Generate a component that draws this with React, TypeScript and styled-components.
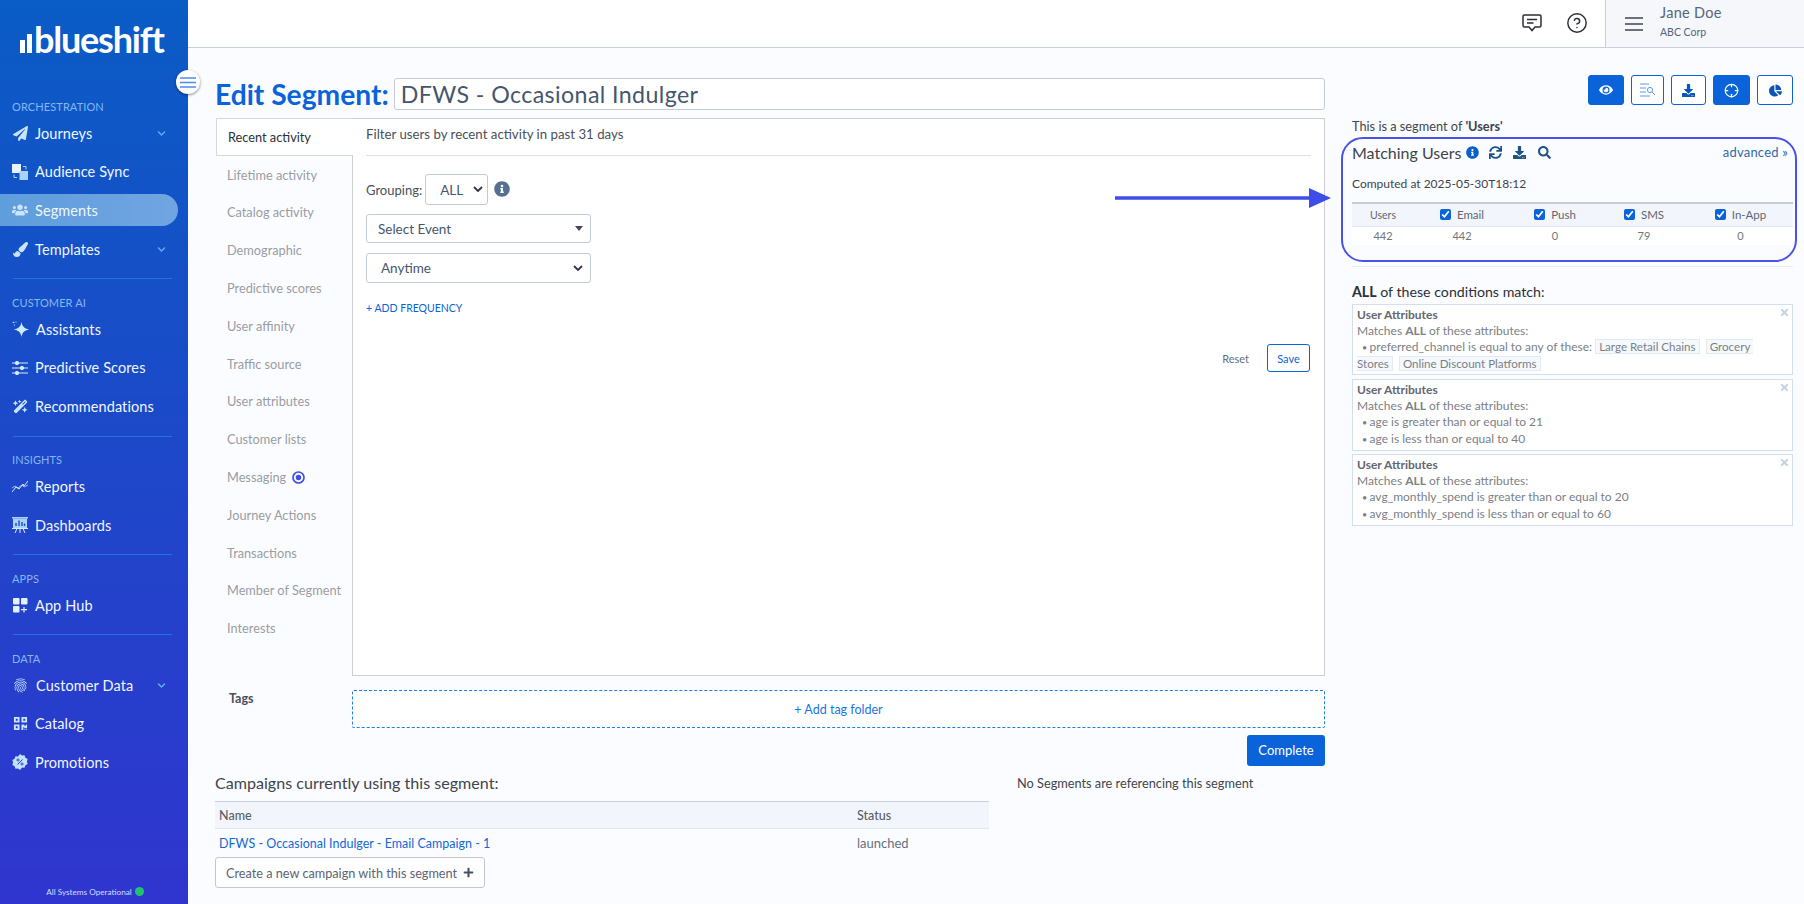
import React from "react";
import styled, { createGlobalStyle } from "styled-components";
import {
  FaChartPie,
  FaChevronDown,
  FaDownload,
  FaEye,
  FaInfoCircle,
  FaPaintBrush,
  FaPaperPlane,
  FaPlus,
  FaQrcode,
  FaSearch,
  FaSync,
  FaTimes,
  FaUsers,
} from "react-icons/fa";
import { FaWandMagicSparkles } from "react-icons/fa6";
import { MdFingerprint } from "react-icons/md";
import { CircleHelp, Crosshair } from "lucide-react";

const FONT = `Lato, "Open Sans", "Liberation Sans", sans-serif`;
const chevron =
  "data:image/svg+xml,%3Csvg xmlns='http://www.w3.org/2000/svg' width='10' height='7' viewBox='0 0 10 7'%3E%3Cpath d='M1 1l4 4 4-4' fill='none' stroke='%23334' stroke-width='1.8'/%3E%3C/svg%3E";
const caret =
  "data:image/svg+xml,%3Csvg xmlns='http://www.w3.org/2000/svg' width='8' height='5' viewBox='0 0 8 5'%3E%3Cpath d='M0 0h8L4 5z' fill='%23445'/%3E%3C/svg%3E";

const GlobalStyle = createGlobalStyle`
  html, body {
    margin: 0;
    height: 100%;
    overflow: hidden;
    background: #fbfcff;
    font-family: ${FONT};
  }
  * { box-sizing: border-box; }
`;

const Page = styled.div`
  position: relative;
  display: flex;
  width: 1804px;
  height: 904px;
  overflow: hidden;
`;

/* sidebar */
const Sidebar = styled.aside`
  position: relative;
  flex: 0 0 188px;
  display: flex;
  flex-direction: column;
  background: linear-gradient(180deg, #0a5cc6 0%, #1b4ac8 45%, #3035cf 100%);
`;

const Logo = styled.div`
  display: flex;
  align-items: flex-end;
  height: 100px;
  padding: 0 0 47px 20px;
  color: #fff;
`;

const LogoBar = styled.span<{ $h: number }>`
  width: 5px;
  height: ${(p) => p.$h}px;
  margin-right: 2px;
  background: #fff;
`;

const LogoText = styled.span`
  height: 25px;
  font-size: 36px;
  line-height: 23px;
  font-weight: 700;
  letter-spacing: -1.2px;
`;

const SectionLabel = styled.div`
  height: 14px;
  padding-left: 12px;
  font-size: 11px;
  line-height: 14px;
  color: #86b6f2;
  text-transform: uppercase;
  letter-spacing: 0.1px;
`;

const NavList = styled.div`
  display: flex;
  flex-direction: column;
  gap: 6.6px;
  padding: 3.3px 0;
`;

const NavRow = styled.div<{ $active?: boolean }>`
  display: flex;
  align-items: center;
  gap: 7px;
  width: 178px;
  height: 32px;
  padding: 0 12px;
  border-radius: 0 16px 16px 0;
  background: ${(p) => (p.$active ? "linear-gradient(90deg, #5f9ddc, #70a5e1)" : "transparent")};
  color: #f0f6ff;
  font-size: 14.5px;
  letter-spacing: 0.1px;
`;

const NavIcon = styled.span`
  flex: 0 0 16px;
  display: flex;
  align-items: center;
  justify-content: center;
  color: #c9e4ff;
`;

const NavName = styled.span`
  flex: 1;
  white-space: nowrap;
`;

const NavChevron = styled(FaChevronDown)`
  color: #5cb0f2;
  width: 9px;
  height: 9px;
`;

const NavRule = styled.div`
  height: 1px;
  margin: 10px 16px 16.5px 13px;
  background: #2272e2;
`;

const SidebarFooter = styled.div`
  margin-top: auto;
  height: 17px;
  display: flex;
  align-items: flex-start;
  justify-content: center;
  gap: 3px;
  padding-left: 2px;
  font-size: 8.2px;
  color: #d5defa;
`;

const StatusDot = styled.span`
  width: 9px;
  height: 9px;
  border-radius: 50%;
  background: #1fc46c;
`;

const CollapseToggle = styled.button`
  position: absolute;
  left: 176px;
  top: 70px;
  width: 24px;
  height: 24px;
  padding: 0;
  border: 0;
  border-radius: 50%;
  background: #fff;
  box-shadow: 0 1px 3px rgba(0, 0, 0, 0.45);
  display: flex;
  align-items: center;
  justify-content: center;
  z-index: 2;
`;

/* top bar */
const Main = styled.div`
  flex: 1;
  display: flex;
  flex-direction: column;
  min-width: 0;
`;

const TopBar = styled.header`
  height: 48px;
  flex: 0 0 48px;
  display: flex;
  justify-content: flex-end;
  background: #fff;
  border-bottom: 1px solid #c9cfda;
`;

const TopIcon = styled.span`
  width: 45px;
  display: flex;
  align-items: center;
  justify-content: center;
  color: #2c2f36;
  padding-bottom: 2px;
`;

const UserPanel = styled.div`
  width: 199px;
  margin-left: 6px;
  display: flex;
  align-items: center;
  gap: 16px;
  padding: 0 0 0 18px;
  background: #f5f7fb;
  border-left: 1px solid #c9cfda;
`;

const UserName = styled.div`
  font-size: 14.5px;
  line-height: 16px;
  color: #55657c;
  letter-spacing: 0.3px;
  margin-top: -4px;
`;

const UserOrg = styled.div`
  font-size: 10.5px;
  line-height: 12px;
  margin-top: 5px;
  color: #55657c;
`;

/* content */
const Content = styled.div`
  flex: 1;
  display: flex;
  padding: 0 11px 0 27px;
  gap: 27px;
`;

const LeftColumn = styled.div`
  flex: 0 0 1110px;
  padding-top: 30px;
`;

const RightColumn = styled.div`
  flex: 1;
  padding-top: 27px;
`;

const TitleRow = styled.div`
  display: flex;
  align-items: center;
  gap: 5px;
  height: 32px;
`;

const Title = styled.h1`
  margin: 0;
  font-size: 28.2px;
  font-weight: 700;
  color: #0a63d8;
  white-space: nowrap;
`;

const NameInput = styled.input`
  flex: 1;
  height: 32px;
  padding: 0 6px;
  border: 1px solid #c4cbd6;
  border-radius: 3px;
  background: #fff;
  color: #45566e;
  font: 400 23.2px ${FONT};
  letter-spacing: 0.4px;
`;

const TabPanel = styled.div`
  display: flex;
  height: 558px;
  margin-top: 8px;
`;

const TabList = styled.div`
  flex: 0 0 136px;
  margin-left: 1px;
  position: relative;
  z-index: 1;
`;

const Tab = styled.div<{ $active?: boolean }>`
  display: flex;
  align-items: center;
  gap: 6px;
  height: 37.8px;
  padding-left: 11px;
  font-size: 12.75px;
  white-space: nowrap;
  color: ${(p) => (p.$active ? "#2a2f38" : "#9a9da3")};
  ${(p) =>
    p.$active &&
    `
    background: #fff;
    border: 1px solid #d6d8dc;
    border-right: 0;
    margin-right: -1px;
  `}
`;

const TabBody = styled.div`
  flex: 1;
  padding: 0 13px;
  background: #fff;
  border: 1px solid #cfcfd2;
`;

const TabHeading = styled.div`
  height: 37px;
  line-height: 31px;
  font-size: 13.25px;
  color: #4a4f58;
  border-bottom: 1px solid #dcdfe4;
`;

const GroupingRow = styled.div`
  display: flex;
  align-items: center;
  gap: 3px;
  height: 31px;
  margin-top: 18px;
  font-size: 13px;
  color: #4a4f58;
  svg { color: #56708f; margin: -2px 0 0 3px; }
`;

const selectBase = `
  appearance: none;
  border: 1px solid #c4cbd6;
  border-radius: 3px;
  background-color: #fff;
  background-repeat: no-repeat;
  color: #45566e;
  font: 400 13.5px ${FONT};
`;

const GroupingSelect = styled.select`
  ${selectBase}
  width: 63px;
  height: 31px;
  padding-left: 14px;
  background-image: url("${chevron}");
  background-position: right 4px center;
`;

const WideSelect = styled.select<{ $caret?: boolean }>`
  ${selectBase}
  display: block;
  width: 225px;
  height: ${(p) => (p.$caret ? 29 : 30)}px;
  margin-top: ${(p) => (p.$caret ? 9 : 10)}px;
  padding-left: ${(p) => (p.$caret ? 11 : 14)}px;
  background-image: url("${(p) => (p.$caret ? caret : chevron)}");
  background-position: right 7px center;
`;

const AddFrequency = styled.div`
  margin-top: 17px;
  height: 17px;
  line-height: 17px;
  font-size: 10.5px;
  color: #0a63d8;
`;

const FormActions = styled.div`
  display: flex;
  justify-content: flex-end;
  align-items: center;
  gap: 18px;
  margin: 27px 1px 0 0;
  font-size: 11px;
  color: #66707e;
`;

const SaveButton = styled.button`
  width: 43px;
  height: 28px;
  background: #fff;
  border: 1px solid #0a63d8;
  border-radius: 3px;
  color: #0a63d8;
  font: 400 11px ${FONT};
`;

const TagsRow = styled.div`
  display: flex;
  margin-top: 14px;
`;

const TagsLabel = styled.div`
  flex: 0 0 137px;
  padding: 1px 0 0 14px;
  font-size: 12.5px;
  font-weight: 700;
  color: #4a4f58;
`;

const TagFolder = styled.div`
  flex: 1;
  height: 38px;
  display: flex;
  align-items: center;
  justify-content: center;
  background: #fff;
  border: 1px dashed #1e7de6;
  border-radius: 2px;
  color: #1c74e0;
  font-size: 12.5px;
`;

const CompleteRow = styled.div`
  display: flex;
  justify-content: flex-end;
  margin-top: 7px;
`;

const CompleteButton = styled.button`
  width: 78px;
  height: 31px;
  padding-bottom: 2px;
  border: 0;
  border-radius: 3px;
  background: #0a63d8;
  color: #fff;
  font: 400 13px ${FONT};
`;

const BottomGrid = styled.div`
  display: flex;
  margin-top: 6px;
`;

const CampaignColumn = styled.div`
  flex: 0 0 774px;
`;

const SectionHeading = styled.div`
  height: 22px;
  line-height: 22px;
  font-size: 16.1px;
  color: #3f444d;
`;

const CampaignHead = styled.div`
  display: grid;
  grid-template-columns: 638px 1fr;
  height: 28px;
  margin-top: 7px;
  align-items: center;
  padding-left: 4px;
  background: #f2f6fc;
  border-top: 1px solid #c9cfda;
  border-bottom: 1px solid #e2e6ee;
  font-size: 12.5px;
  font-weight: 500;
  color: #5b6068;
`;

const CampaignRow = styled.div`
  display: grid;
  grid-template-columns: 638px 1fr;
  height: 28px;
  align-items: center;
  padding-left: 4px;
  font-size: 13px;
  color: #66707e;
`;

const CampaignLink = styled.a`
  color: #1468d6;
  font-size: 12.5px;
`;

const CreateButton = styled.button`
  display: flex;
  align-items: center;
  gap: 6px;
  height: 31px;
  padding: 0 10px;
  background: #fff;
  border: 1px solid #c4c8ce;
  border-radius: 3px;
  color: #5a6472;
  font: 400 12.7px ${FONT};
  svg { color: #46505e; }
`;

const NoSegments = styled.div`
  padding-left: 28px;
  font-size: 12.75px;
  line-height: 22px;
  color: #3f444d;
`;

/* right side */
const Toolbar = styled.div`
  display: flex;
  justify-content: flex-end;
  gap: 7px;
`;

const ToolButton = styled.span<{ $filled?: boolean; $w: number }>`
  width: ${(p) => p.$w}px;
  height: 30px;
  display: flex;
  align-items: center;
  justify-content: center;
  border: 1px solid #0a63d8;
  border-radius: 3px;
  background: ${(p) => (p.$filled ? "#0a63d8" : "#fff")};
  color: ${(p) => (p.$filled ? "#fff" : "#0a56b8")};
`;

const SegmentNote = styled.div`
  margin-top: 13px;
  height: 16px;
  line-height: 16px;
  font-size: 12.75px;
  color: #3f444d;
  b { color: #3f444d; }
`;

const MatchBox = styled.section`
  margin: 3px -4px 0 -11px;
  padding: 2px 2px 0 9px;
  height: 125px;
  border: 2px solid #4a52ea;
  border-radius: 22px;
`;

const MatchHead = styled.div`
  display: flex;
  align-items: center;
  height: 22px;
  color: #1f5288;
`;

const MatchTitle = styled.span`
  margin-right: 5px;
  font-size: 16px;
  color: #3f444d;
`;

const MatchTool = styled.span<{ $gap?: number }>`
  display: flex;
  margin-left: ${(p) => p.$gap ?? 11}px;
`;

const AdvancedLink = styled.a`
  margin-left: auto;
  margin-right: 5px;
  font-size: 13px;
  color: #2f6aa6;
  letter-spacing: 0.2px;
`;

const ComputedAt = styled.div`
  margin-top: 13px;
  height: 16px;
  line-height: 16px;
  font-size: 12px;
  color: #3f444d;
`;

const CountTable = styled.table`
  width: 441px;
  margin-top: 10px;
  border-collapse: collapse;
  table-layout: fixed;
  text-align: center;
  th {
    height: 23px;
    background: #f2f6fc;
    border-top: 2px solid #c8ccd4;
    border-bottom: 1px solid #e2e6ee;
    font-size: 11.5px;
    font-weight: 400;
    color: #5f6670;
    padding: 0;
  }
  th:first-child { font-size: 10.5px; }
  td {
    height: 19px;
    background: #fff;
    font-size: 11px;
    color: #70757d;
    padding: 0;
  }
`;

const ChannelCheck = styled.input`
  width: 11px;
  height: 11px;
  margin: 0 6px 0 0;
  vertical-align: -1px;
  accent-color: #0a63d8;
`;

const ThinRule = styled.div`
  height: 1px;
  margin-top: 4px;
  background: #e8ecf2;
`;

const ConditionsHeading = styled.div`
  margin-top: 16px;
  height: 18px;
  line-height: 18px;
  font-size: 14.2px;
  color: #2c2f36;
`;

const ConditionCard = styled.div`
  position: relative;
  margin-top: 3px;
  padding: 2px 4px;
  background: #fff;
  border: 1px solid #d3dfec;
  font-size: 12px;
  line-height: 16px;
  color: #7b7f86;
  & + & { margin-top: 3.5px; }
`;

const ConditionTitle = styled.div`
  font-weight: 700;
  color: #63676e;
`;

const ConditionLine = styled.div`
  text-indent: 5px;
  &::before { content: "• "; font-size: 9px; }
`;

const Chip = styled.span<{ $open?: "left" | "right" }>`
  padding: 0 3px;
  margin-right: 3px;
  font-size: 11.6px;
  background: #f5f9fd;
  border: 1px solid #e2eaf3;
  ${(p) => p.$open === "right" && "border-right: 0; margin-right: 0;"}
  ${(p) => p.$open === "left" && "border-left: 0; padding-left: 0;"}
`;

const RemoveIcon = styled(FaTimes)`
  position: absolute;
  top: 2px;
  right: 2px;
  width: 11px;
  height: 11px;
  color: #c5d3e0;
`;

const Arrow = styled.svg`
  position: absolute;
  left: 1115px;
  top: 187px;
`;

/* small drawn icons */
const AudienceIcon = () => (
  <svg width="16" height="16" viewBox="0 0 16 16">
    <rect x="0" y="0" width="9" height="9" fill="#e8f3ff" />
    <rect x="7.5" y="7" width="8.5" height="9" fill="#a9d2f8" />
    <path d="M11 2.5h3v3M2 10.5v3h3" fill="none" stroke="#a9d2f8" strokeWidth="1" />
  </svg>
);
const SparkleIcon = () => (
  <svg width="17" height="17" viewBox="0 0 17 17">
    <path d="M9.500 1c.7 4.300 2.500 6.200 7.500 7.500-5 1.300-6.800 3.200-7.500 7.500-.7-4.300-2.500-6.200-7.500-7.500 5-1.300 6.800-3.200 7.500-7.500z" fill="#cdeaff" />
    <circle cx="1.500" cy="1.500" r=".8" fill="#cdeaff" />
    <circle cx="4" cy="1" r=".6" fill="#cdeaff" />
    <circle cx="2.500" cy="4" r=".6" fill="#cdeaff" />
  </svg>
);
const SlidersIcon = () => (
  <svg width="16" height="14" viewBox="0 0 16 14" stroke="#d5ebff" strokeWidth="1" fill="#d5ebff">
    <path d="M0 2h16M0 7h16M0 12h16" />
    <circle cx="5" cy="2" r="1.700" />
    <circle cx="10" cy="7" r="1.700" />
    <circle cx="5" cy="12" r="1.700" />
  </svg>
);
const ReportsIcon = () => (
  <svg width="16" height="13" viewBox="0 0 16 13" fill="none" stroke="#d5ebff" strokeWidth="1">
    <path d="M0 12l4-5 3 2 4-5 1 2 4-5" />
    <path d="M0 8l3-2 3 2 4-3 2 2 4-2" opacity=".7" />
  </svg>
);
const DashboardIcon = () => (
  <svg width="16" height="16" viewBox="0 0 16 16">
    <rect x="0" y="0" width="16" height="1.500" fill="#a9d2f8" />
    <rect x="1" y="1.500" width="14" height="9.500" fill="#a9d2f8" />
    <path d="M4 9V6M7 9V3.500M10 9V5M12.500 9V6.500" stroke="#1b4ac8" strokeWidth="1.400" />
    <path d="M0 11.500h16M8 11.500V16M5 11.500L3 16M11 11.500L13 16" stroke="#d5ebff" strokeWidth="1" />
  </svg>
);
const AppHubIcon = () => (
  <svg width="15" height="15" viewBox="0 0 15 15" fill="#e3f1ff">
    <rect x="0" y="0" width="6.500" height="6.500" rx="1" />
    <rect x="8" y="0" width="6.500" height="6.500" rx="1" />
    <rect x="0" y="8" width="6.500" height="6.500" rx="1" />
    <path d="M11 9v5.500M8 11.700h6" stroke="#e3f1ff" strokeWidth="1.200" />
  </svg>
);
const PromoIcon = () => (
  <svg width="16" height="16" viewBox="0 0 16 16">
    <path d="M8 0l2 1.600 2.500-.3.900 2.400 2.200 1.300-.7 2.500.7 2.500-2.200 1.300-.9 2.400-2.500-.3L8 16l-2-1.600-2.500.3-.9-2.400L.4 11l.7-2.500L.4 6l2.200-1.300.9-2.400 2.500.3z" fill="#c4e2fd" />
    <path d="M5.500 10.500l5-5" stroke="#1f3fc8" strokeWidth="1" />
    <circle cx="6" cy="6" r="1.100" fill="none" stroke="#1f3fc8" strokeWidth=".9" />
    <circle cx="10" cy="10" r="1.100" fill="none" stroke="#1f3fc8" strokeWidth=".9" />
  </svg>
);
const CommentIcon = () => (
  <svg width="20" height="18" viewBox="0 0 20 18" fill="none" stroke="#2c2f36" strokeWidth="1.500">
    <path d="M2.500 1h15a1.500 1.500 0 0 1 1.500 1.500v9a1.500 1.500 0 0 1-1.500 1.500H13l-3 3.500L7 13H2.500A1.500 1.500 0 0 1 1 11.500v-9A1.500 1.500 0 0 1 2.500 1z" />
    <path d="M5 5.500h10M5 9h6.500" />
  </svg>
);
const MenuIcon = () => (
  <svg width="20" height="14" viewBox="0 0 20 14" stroke="#3f444d" strokeWidth="1.500">
    <path d="M1 1h18M1 7h18M1 13h18" />
  </svg>
);
const ToggleLines = () => (
  <svg width="16" height="11" viewBox="0 0 16 11" stroke="#4c8cf0" strokeWidth="1.500">
    <path d="M0 1h16M0 5.500h16M0 10h16" />
  </svg>
);
const FilterSearchIcon = () => (
  <svg width="16" height="14" viewBox="0 0 16 14" fill="none" stroke="#5f9ae6" strokeWidth="1">
    <path d="M0 1h9M0 5h6M0 9h6M0 13h10" />
    <circle cx="10" cy="7" r="2.600" />
    <path d="M12 9l3 3" />
  </svg>
);
const MessagingDot = () => (
  <svg width="13" height="13" viewBox="0 0 13 13">
    <circle cx="6.500" cy="6.500" r="5.500" fill="none" stroke="#3d4fe8" strokeWidth="1.700" />
    <circle cx="6.500" cy="6.500" r="2.700" fill="#3d4fe8" />
  </svg>
);

const navSections = [
  {
    label: "Orchestration",
    items: [
      { name: "Journeys", icon: <FaPaperPlane size={15} />, more: true },
      { name: "Audience Sync", icon: <AudienceIcon /> },
      { name: "Segments", icon: <FaUsers size={16} />, active: true },
      { name: "Templates", icon: <FaPaintBrush size={15} />, more: true },
    ],
  },
  {
    label: "Customer AI",
    items: [
      { name: "Assistants", icon: <SparkleIcon /> },
      { name: "Predictive Scores", icon: <SlidersIcon /> },
      { name: "Recommendations", icon: <FaWandMagicSparkles size={15} /> },
    ],
  },
  {
    label: "Insights",
    items: [
      { name: "Reports", icon: <ReportsIcon /> },
      { name: "Dashboards", icon: <DashboardIcon /> },
    ],
  },
  {
    label: "Apps",
    items: [{ name: "App Hub", icon: <AppHubIcon /> }],
  },
  {
    label: "Data",
    items: [
      { name: "Customer Data", icon: <MdFingerprint size={17} />, more: true },
      { name: "Catalog", icon: <FaQrcode size={15} /> },
      { name: "Promotions", icon: <PromoIcon /> },
    ],
  },
];

const tabs = [
  "Recent activity",
  "Lifetime activity",
  "Catalog activity",
  "Demographic",
  "Predictive scores",
  "User affinity",
  "Traffic source",
  "User attributes",
  "Customer lists",
  "Messaging",
  "Journey Actions",
  "Transactions",
  "Member of Segment",
  "Interests",
];

const channels = [
  { name: "Email", count: "442", width: 96 },
  { name: "Push", count: "0", width: 90 },
  { name: "SMS", count: "79", width: 88 },
  { name: "In-App", count: "0", width: 105 },
];

export default function App() {
  return (
    <Page>
      <GlobalStyle />
      <Sidebar>
        <Logo>
          <LogoBar $h={13} />
          <LogoBar $h={19} />
          <LogoText>blueshift</LogoText>
        </Logo>
        {navSections.map((section, i) => (
          <div key={section.label}>
            {i > 0 && <NavRule />}
            <SectionLabel>{section.label}</SectionLabel>
            <NavList>
              {section.items.map((item) => (
                <NavRow key={item.name} $active={"active" in item && item.active}>
                  <NavIcon>{item.icon}</NavIcon>
                  <NavName>{item.name}</NavName>
                  {"more" in item && item.more && <NavChevron />}
                </NavRow>
              ))}
            </NavList>
          </div>
        ))}
        <SidebarFooter>
          All Systems Operational <StatusDot />
        </SidebarFooter>
        <CollapseToggle aria-label="Collapse">
          <ToggleLines />
        </CollapseToggle>
      </Sidebar>

      <Main>
        <TopBar>
          <TopIcon>
            <CommentIcon />
          </TopIcon>
          <TopIcon>
            <CircleHelp size={22} strokeWidth={1.6} />
          </TopIcon>
          <UserPanel>
            <MenuIcon />
            <div>
              <UserName>Jane Doe</UserName>
              <UserOrg>ABC Corp</UserOrg>
            </div>
          </UserPanel>
        </TopBar>

        <Content>
          <LeftColumn>
            <TitleRow>
              <Title>Edit Segment:</Title>
              <NameInput readOnly value="DFWS - Occasional Indulger" />
            </TitleRow>

            <TabPanel>
              <TabList>
                {tabs.map((tab, i) => (
                  <Tab key={tab} $active={i === 0}>
                    {tab}
                    {tab === "Messaging" && <MessagingDot />}
                  </Tab>
                ))}
              </TabList>
              <TabBody>
                <TabHeading>Filter users by recent activity in past 31 days</TabHeading>
                <GroupingRow>
                  Grouping:
                  <GroupingSelect defaultValue="ALL">
                    <option>ALL</option>
                  </GroupingSelect>
                  <FaInfoCircle size={16} />
                </GroupingRow>
                <WideSelect $caret defaultValue="Select Event">
                  <option>Select Event</option>
                </WideSelect>
                <WideSelect defaultValue="Anytime">
                  <option>Anytime</option>
                </WideSelect>
                <AddFrequency>+ ADD FREQUENCY</AddFrequency>
                <FormActions>
                  Reset
                  <SaveButton>Save</SaveButton>
                </FormActions>
              </TabBody>
            </TabPanel>

            <TagsRow>
              <TagsLabel>Tags</TagsLabel>
              <TagFolder>+ Add tag folder</TagFolder>
            </TagsRow>
            <CompleteRow>
              <CompleteButton>Complete</CompleteButton>
            </CompleteRow>

            <BottomGrid>
              <CampaignColumn>
                <SectionHeading>Campaigns currently using this segment:</SectionHeading>
                <CampaignHead>
                  <span>Name</span>
                  <span>Status</span>
                </CampaignHead>
                <CampaignRow>
                  <CampaignLink>DFWS - Occasional Indulger - Email Campaign - 1</CampaignLink>
                  <span>launched</span>
                </CampaignRow>
                <CreateButton>
                  Create a new campaign with this segment <FaPlus size={11} />
                </CreateButton>
              </CampaignColumn>
              <NoSegments>No Segments are referencing this segment</NoSegments>
            </BottomGrid>
          </LeftColumn>

          <RightColumn>
            <Toolbar>
              <ToolButton $filled $w={36}>
                <FaEye size={14} />
              </ToolButton>
              <ToolButton $w={33}>
                <FilterSearchIcon />
              </ToolButton>
              <ToolButton $w={35}>
                <FaDownload size={13} />
              </ToolButton>
              <ToolButton $filled $w={37}>
                <Crosshair size={15} strokeWidth={2} />
              </ToolButton>
              <ToolButton $w={36}>
                <FaChartPie size={13} />
              </ToolButton>
            </Toolbar>

            <SegmentNote>
              This is a segment of <b>'Users'</b>
            </SegmentNote>

            <MatchBox>
              <MatchHead>
                <MatchTitle>Matching Users</MatchTitle>
                <FaInfoCircle size={13} color="#0a5fcc" />
                <MatchTool $gap={10}>
                  <FaSync size={13} />
                </MatchTool>
                <MatchTool>
                  <FaDownload size={13} />
                </MatchTool>
                <MatchTool $gap={12}>
                  <FaSearch size={13} />
                </MatchTool>
                <AdvancedLink>advanced »</AdvancedLink>
              </MatchHead>
              <ComputedAt>Computed at 2025-05-30T18:12</ComputedAt>
              <CountTable>
                <colgroup>
                  <col style={{ width: 62 }} />
                  {channels.map((c) => (
                    <col key={c.name} style={{ width: c.width }} />
                  ))}
                </colgroup>
                <thead>
                  <tr>
                    <th>Users</th>
                    {channels.map((c) => (
                      <th key={c.name}>
                        <ChannelCheck type="checkbox" readOnly checked />
                        {c.name}
                      </th>
                    ))}
                  </tr>
                </thead>
                <tbody>
                  <tr>
                    <td>442</td>
                    {channels.map((c) => (
                      <td key={c.name}>{c.count}</td>
                    ))}
                  </tr>
                </tbody>
              </CountTable>
            </MatchBox>
            <ThinRule />

            <ConditionsHeading>
              <b>ALL</b> of these conditions match:
            </ConditionsHeading>
            <ConditionCard>
              <RemoveIcon />
              <ConditionTitle>User Attributes</ConditionTitle>
              <div>
                Matches <b>ALL</b> of these attributes:
              </div>
              <ConditionLine>
                preferred_channel is equal to any of these: <Chip>Large Retail Chains</Chip>{" "}
                <Chip $open="right">Grocery</Chip> <Chip $open="left">Stores</Chip>{" "}
                <Chip>Online Discount Platforms</Chip>
              </ConditionLine>
            </ConditionCard>
            <ConditionCard>
              <RemoveIcon />
              <ConditionTitle>User Attributes</ConditionTitle>
              <div>
                Matches <b>ALL</b> of these attributes:
              </div>
              <ConditionLine>age is greater than or equal to 21</ConditionLine>
              <ConditionLine>age is less than or equal to 40</ConditionLine>
            </ConditionCard>
            <ConditionCard>
              <RemoveIcon />
              <ConditionTitle>User Attributes</ConditionTitle>
              <div>
                Matches <b>ALL</b> of these attributes:
              </div>
              <ConditionLine>avg_monthly_spend is greater than or equal to 20</ConditionLine>
              <ConditionLine>avg_monthly_spend is less than or equal to 60</ConditionLine>
            </ConditionCard>
          </RightColumn>
        </Content>
      </Main>

      <Arrow width="216" height="22" viewBox="0 0 216 22">
        <path d="M0 11h198" stroke="#3f4de8" strokeWidth="3.500" />
        <path d="M194 1l22 10-22 10z" fill="#3f4de8" />
      </Arrow>
    </Page>
  );
}
